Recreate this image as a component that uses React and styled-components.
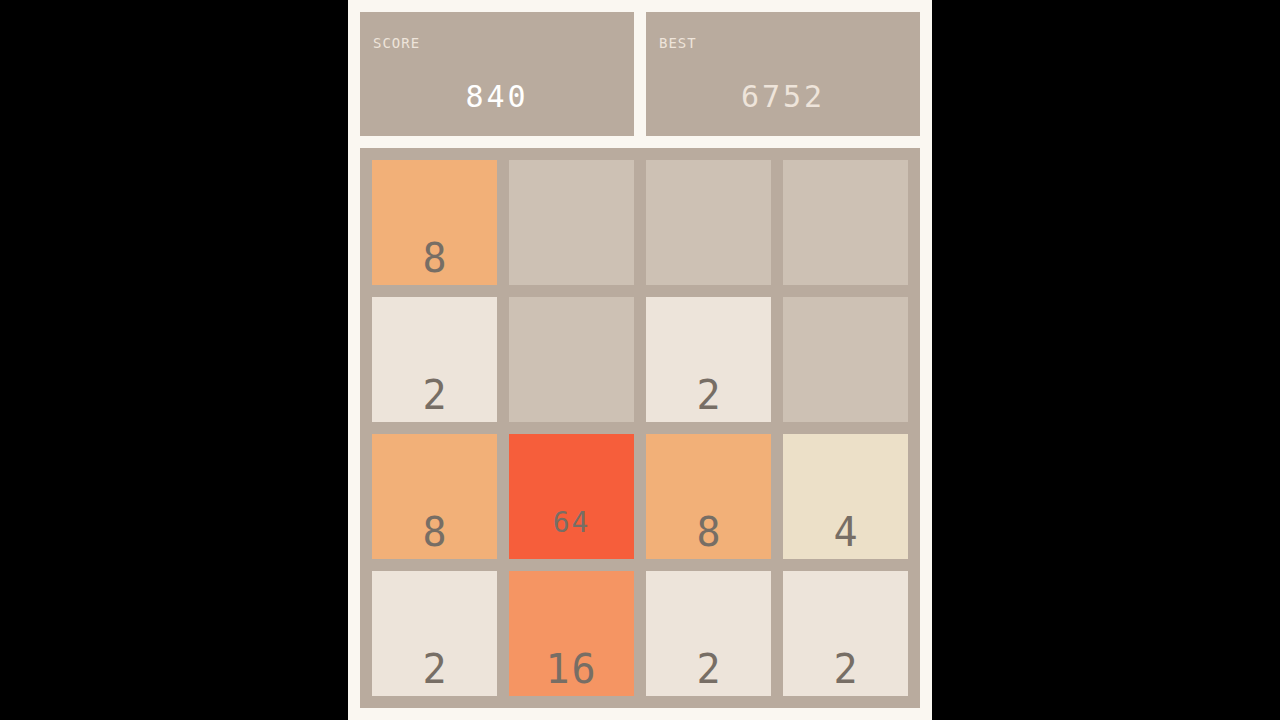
import React from "react";
import styled, { createGlobalStyle } from "styled-components";

const GlobalStyle = createGlobalStyle`
  html, body {
    margin: 0;
    padding: 0;
    background: #000;
  }
  body {
    font-family: "DejaVu Sans Mono", "Liberation Mono", monospace;
  }
`;

const Column = styled.div`
  width: 584px;
  height: 720px;
  margin: 0 auto;
  box-sizing: border-box;
  padding: 12px;
  background: #faf7f1;
  display: flex;
  flex-direction: column;
  gap: 12px;
  overflow: hidden;
`;

const ScoreRow = styled.div`
  display: flex;
  gap: 12px;
`;

const ScoreBox = styled.div`
  flex: 1;
  height: 124px;
  background: #b9ab9e;
  box-sizing: border-box;
  padding: 23px 13px 0;
  display: flex;
  flex-direction: column;
`;

const Label = styled.div`
  font-size: 14px;
  letter-spacing: 1px;
  color: #eee4da;
  line-height: 16px;
`;

const Value = styled.div`
  margin-top: 28px;
  text-align: center;
  font-size: 30px;
  line-height: 36px;
  letter-spacing: 3px;
  color: ${({ $dim }) => ($dim ? "#eee4da" : "#ffffff")};
`;

const Board = styled.div`
  background: #b9ab9e;
  padding: 12px;
  display: grid;
  grid-template-columns: repeat(4, 125px);
  grid-auto-rows: 125px;
  gap: 12px;
`;

const colors = {
  0: "#cdc1b4",
  2: "#ede4da",
  4: "#ece0c8",
  8: "#f2b078",
  16: "#f59563",
  64: "#f65e3b",
};

const Tile = styled.div`
  background: ${({ $v }) => colors[$v]};
  display: flex;
  align-items: flex-end;
  justify-content: center;
  box-sizing: border-box;
  padding-bottom: ${({ $v }) => ($v >= 64 ? 22 : 7)}px;
  color: #776e65;
  font-size: ${({ $v }) => ($v >= 64 ? 28 : 40)}px;
  line-height: 1;
  letter-spacing: ${({ $v }) => ($v >= 10 ? 2 : 0)}px;
`;

const grid = [
  [8, 0, 0, 0],
  [2, 0, 2, 0],
  [8, 64, 8, 4],
  [2, 16, 2, 2],
];

export default function App() {
  return (
    <>
      <GlobalStyle />
      <Column>
        <ScoreRow>
          <ScoreBox>
            <Label>SCORE</Label>
            <Value>840</Value>
          </ScoreBox>
          <ScoreBox>
            <Label>BEST</Label>
            <Value $dim>6752</Value>
          </ScoreBox>
        </ScoreRow>
        <Board>
          {grid.flat().map((v, i) => (
            <Tile key={i} $v={v}>
              {v ? v : ""}
            </Tile>
          ))}
        </Board>
      </Column>
    </>
  );
}
